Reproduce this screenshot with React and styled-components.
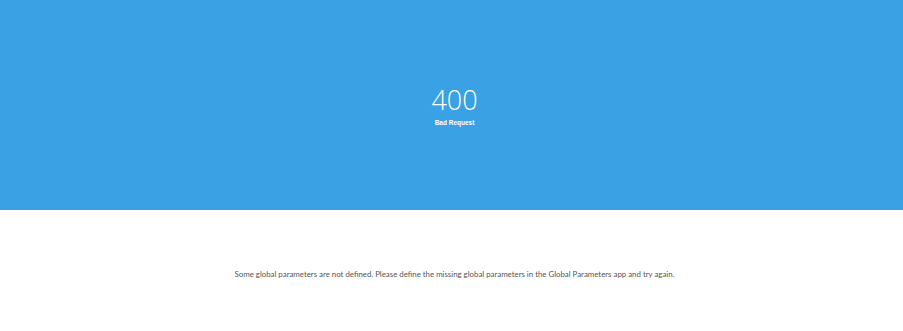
import React from 'react'
import styled, { createGlobalStyle } from 'styled-components'

const GlobalStyle = createGlobalStyle`
  html, body {
    margin: 0;
    padding: 0;
    background: #ffffff;
  }
`

const Page = styled.div`
  width: 100%;
  min-height: 331px;
  display: flex;
  flex-direction: column;
`

const Banner = styled.header`
  height: 210px;
  background: #3aa1e4;
  display: flex;
  flex-direction: column;
  align-items: center;
  justify-content: center;
  color: #ffffff;
  padding-left: 6px;
  padding-top: 2px;
  box-sizing: border-box;
`

const Code = styled.h1`
  margin: 0;
  font-family: "Open Sans", sans-serif;
  font-weight: 300;
  font-size: 27px;
  line-height: 32px;
`

const Reason = styled.div`
  font-family: "Liberation Sans", Arial, sans-serif;
  font-weight: 700;
  font-size: 6.5px;
  line-height: 10px;
  margin-top: 2px;
`

const Body = styled.main`
  display: flex;
  justify-content: center;
  padding-top: 58px;
  padding-left: 6px;
`

const Message = styled.p`
  margin: 0;
  font-family: Lato, "Open Sans", sans-serif;
  font-size: 7.85px;
  line-height: 12px;
  color: #555555;
`

export default function App() {
  return (
    <>
      <GlobalStyle />
      <Page>
        <Banner>
          <Code>400</Code>
          <Reason>Bad Request</Reason>
        </Banner>
        <Body>
          <Message>
            Some global parameters are not defined. Please define the missing global parameters in the Global Parameters app and try again.
          </Message>
        </Body>
      </Page>
    </>
  )
}
